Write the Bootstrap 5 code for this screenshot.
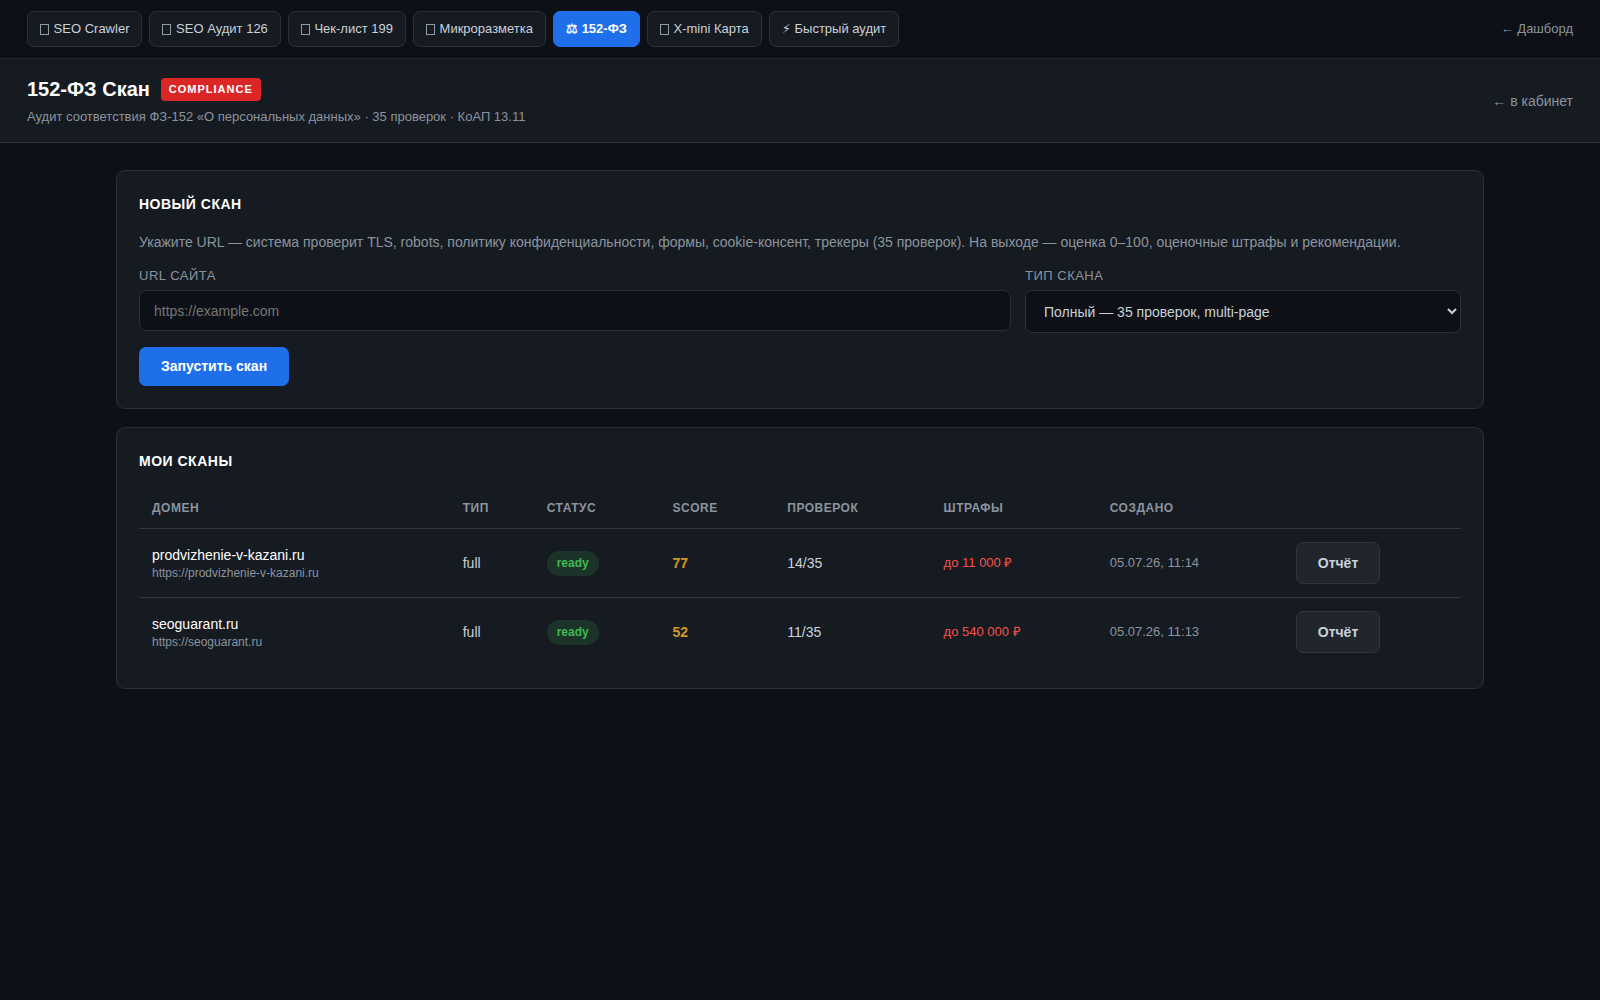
<!DOCTYPE html>
<html lang="ru" data-bs-theme="dark">
<head>
<meta charset="utf-8">
<meta name="viewport" content="width=device-width, initial-scale=1">
<title>152-ФЗ Скан</title>
<link href="https://cdn.jsdelivr.net/npm/bootstrap@5.3.0/dist/css/bootstrap.min.css" rel="stylesheet">
<style>
  :root { --bg: #0d1117; --panel: #161b22; --line: #2a3038; --ink: #c9d1d9; --muted: #8b949e; --blue: #1f6feb; }
  body { background: var(--bg); color: var(--ink); font: 14px/22px "Liberation Sans", Arial, sans-serif; }
  a { text-decoration: none; }
  .tools { padding: 11px 27px; border-bottom: 1px solid #21262d; }
  .tools .nav { gap: 7px; }
  .tools .nav-link { display: flex; align-items: center; padding: 6px 12px; line-height: 22px; font-size: 13px; color: var(--ink); background: var(--panel); border: 1px solid var(--line); border-radius: 7px; white-space: pre; }
  .tools .nav-link.active { color: #fff; background: var(--blue); border-color: var(--blue); font-weight: 700; }
  .glyph-box { width: 9px; height: 11px; margin-right: 1px; border: 1px solid currentColor; opacity: .7; }
  .bolt { font-family: "DejaVu Sans", sans-serif; }
  .back-link { color: var(--muted); }
  .back-sm { font-size: 13px; }
  .page-head { padding: 15px 27px 14px; background: var(--panel); border-bottom: 1px solid #30363d; }
  .page-title { gap: 11px; }
  .page-head h1 { font-size: 20px; line-height: 30px; font-weight: 700; color: #fff; }
  .tag { padding: 0 8px; font-size: 11px; line-height: 23px; font-weight: 700; letter-spacing: 1px; color: #fff; background: #dc2626; border-radius: 4px; }
  .page-sub { margin-top: 2px; font-size: 13px; color: var(--muted); }
  .wrap { max-width: 1368px; padding: 27px 0; }
  .panel { background: var(--panel); border: 1px solid var(--line); border-radius: 9px; padding: 22px; margin-bottom: 18px; }
  .panel h2 { font-size: 14px; line-height: 22px; font-weight: 700; letter-spacing: .5px; text-transform: uppercase; color: #fff; margin-bottom: 16px; }
  .hint { color: var(--muted); margin-bottom: 13px; }
  .scan-form { display: grid; grid-template-columns: 2fr 1fr; gap: 14px; align-items: start; }
  .scan-form label { display: block; font-size: 13px; line-height: 20px; letter-spacing: .5px; text-transform: uppercase; color: var(--muted); margin-bottom: 4px; }
  .field { display: block; width: 100%; height: 41px; padding: 0 14px; font-size: 14px; color: var(--ink); background: var(--bg); border: 1px solid var(--line); border-radius: 7px; }
  select.field { height: 43px; }
  .field::placeholder { color: #757575; }
  .act { padding: 8px 22px; font-size: 14px; line-height: 23px; font-weight: 700; border-radius: 7px; border: 0; }
  .act-go { color: #fff; background: var(--blue); }
  .act-row { padding: 9px 21px; line-height: 22px; color: var(--ink); background: #21262d; border: 1px solid #30363d; }
  .scans { width: 100%; }
  .scans th { padding: 11px 13px; font-size: 12px; line-height: 18px; letter-spacing: .5px; text-transform: uppercase; color: var(--muted); }
  .scans td { padding: 13px; vertical-align: middle; }
  .scans tr { border-bottom: 1px solid #30363d; }
  .scans tbody tr:last-child { border-bottom: 0; }
  .host { color: #fff; line-height: 20px; }
  .host-url { font-size: 12px; line-height: 17px; color: var(--muted); }
  .state { display: inline-block; padding: 3px 10px; font-size: 12px; line-height: 19px; font-weight: 700; color: #3fb950; background: #1c3329; border-radius: 13px; }
  .score { font-weight: 700; color: #d29922; }
  .fine { font-size: 13px; color: #f85149; }
  .date { font-size: 13px; color: var(--muted); }
</style>
<script src="https://cdn.jsdelivr.net/npm/bootstrap@5.3.0/dist/js/bootstrap.bundle.min.js"></script>
</head>
<body>
<nav class="tools d-flex align-items-center justify-content-between">
  <div class="nav">
    <a class="nav-link" href="#"><span class="glyph-box"></span> SEO Crawler</a>
    <a class="nav-link" href="#"><span class="glyph-box"></span> SEO Аудит 126</a>
    <a class="nav-link" href="#"><span class="glyph-box"></span> Чек-лист 199</a>
    <a class="nav-link" href="#"><span class="glyph-box"></span> Микроразметка</a>
    <a class="nav-link active" href="#" aria-current="page">⚖ 152-ФЗ</a>
    <a class="nav-link" href="#"><span class="glyph-box"></span> X-mini Карта</a>
    <a class="nav-link" href="#"><span class="bolt">⚡&#xFE0E;</span> Быстрый аудит</a>
  </div>
  <a class="back-link back-sm" href="#">← Дашборд</a>
</nav>
<header class="page-head d-flex align-items-center justify-content-between">
  <div>
    <div class="page-title d-flex align-items-center">
      <h1 class="mb-0">152-ФЗ Скан</h1><span class="tag">COMPLIANCE</span>
    </div>
    <div class="page-sub">Аудит соответствия ФЗ-152 «О персональных данных» · 35 проверок · КоАП 13.11</div>
  </div>
  <a class="back-link" href="#">← в кабинет</a>
</header>
<main class="wrap mx-auto">
  <section class="panel">
    <h2>Новый скан</h2>
    <p class="hint">Укажите URL — система проверит TLS, robots, политику конфиденциальности, формы, cookie-консент, трекеры (35 проверок). На выходе — оценка 0–100, оценочные штрафы и рекомендации.</p>
    <form class="scan-form">
      <div>
        <label for="url">URL сайта</label>
        <input class="field" id="url" type="url" placeholder="https://example.com">
      </div>
      <div>
        <label for="kind">Тип скана</label>
        <select class="field" id="kind"><option>Полный — 35 проверок, multi-page</option></select>
      </div>
      <div><button class="act act-go" type="button">Запустить скан</button></div>
    </form>
  </section>
  <section class="panel">
    <h2>Мои сканы</h2>
    <table class="scans">
      <thead>
        <tr><th>Домен</th><th>Тип</th><th>Статус</th><th>Score</th><th>Проверок</th><th>Штрафы</th><th>Создано</th><th></th></tr>
      </thead>
      <tbody>
        <tr>
          <td><div class="host">prodvizhenie-v-kazani.ru</div><div class="host-url">https://prodvizhenie-v-kazani.ru</div></td>
          <td>full</td><td><span class="state">ready</span></td><td class="score">77</td><td>14/35</td>
          <td class="fine">до 11 000 ₽</td><td class="date">05.07.26, 11:14</td>
          <td><button class="act act-row" type="button">Отчёт</button></td>
        </tr>
        <tr>
          <td><div class="host">seoguarant.ru</div><div class="host-url">https://seoguarant.ru</div></td>
          <td>full</td><td><span class="state">ready</span></td><td class="score">52</td><td>11/35</td>
          <td class="fine">до 540 000 ₽</td><td class="date">05.07.26, 11:13</td>
          <td><button class="act act-row" type="button">Отчёт</button></td>
        </tr>
      </tbody>
    </table>
  </section>
</main>
</body>
</html>
